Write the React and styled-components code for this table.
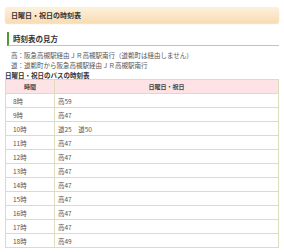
import React from "react";
import styled, { createGlobalStyle } from "styled-components";

const GlobalStyle = createGlobalStyle`
    html, body {
        margin: 0;
        padding: 0;
        background: #fff;
    }
    body {
        font-family: "Noto Sans CJK JP", "Noto Sans", sans-serif;
        color: #444;
    }
`;

const rows = [
    { hour: "8時", times: "高59" },
    { hour: "9時", times: "高47" },
    { hour: "10時", times: "道25　道50" },
    { hour: "11時", times: "高47" },
    { hour: "12時", times: "高47" },
    { hour: "13時", times: "高47" },
    { hour: "14時", times: "高47" },
    { hour: "15時", times: "高47" },
    { hour: "16時", times: "高47" },
    { hour: "17時", times: "高47" },
    { hour: "18時", times: "高49" },
];

function App() {
    return (
        <>
            <GlobalStyle />
            <Page>
                <TitleBox>日曜日・祝日の時刻表</TitleBox>
                <SectionHead>時刻表の見方</SectionHead>
                <Notes>
                    <p>高：阪急高槻駅経由ＪＲ高槻駅南行（道鵜町は経由しません）</p>
                    <p>道：道鵜町から阪急高槻駅経由ＪＲ高槻駅南行</p>
                </Notes>
                <Caption>日曜日・祝日のバスの時刻表</Caption>
                <Table>
                    <thead>
                        <tr>
                            <Th className="hour">時間</Th>
                            <Th>日曜日・祝日</Th>
                        </tr>
                    </thead>
                    <tbody>
                        {rows.map((r) => (
                            <tr key={r.hour}>
                                <Td className="hour">{r.hour}</Td>
                                <Td>{r.times}</Td>
                            </tr>
                        ))}
                    </tbody>
                </Table>
            </Page>
        </>
    );
}

const Page = styled.div`
    width: 284px;
    padding: 7px 5px 0 5px;
    box-sizing: border-box;
`;

const TitleBox = styled.div`
    height: 16px;
    box-sizing: border-box;
    border-radius: 2px;
    background: linear-gradient(to bottom, #fdf1de, #f9dcb2);
    box-shadow: 0 1px 1px rgba(200, 170, 120, 0.35);
    padding-left: 6px;
    font-size: 7px;
    font-weight: bold;
    line-height: 16px;
    color: #333;
`;

const SectionHead = styled.div`
    margin-top: 9px;
    margin-left: 2px;
    height: 14px;
    box-sizing: border-box;
    border-left: 2px solid #4d9a36;
    border-bottom: 1px solid #a9d98c;
    padding-left: 4px;
    font-size: 7.5px;
    font-weight: bold;
    line-height: 13px;
    color: #333;
`;

const Notes = styled.div`
    margin-top: 4px;
    padding-left: 6px;
    p {
        margin: 0;
        font-size: 6.5px;
        line-height: 10px;
        color: #555;
    }
`;

const Caption = styled.div`
    margin-top: 1px;
    font-size: 6.5px;
    font-weight: bold;
    line-height: 8px;
    color: #333;
`;

const Table = styled.table`
    width: 274px;
    border-collapse: collapse;
    font-size: 6.5px;
    color: #555;
    tr {
        height: 14px;
    }
`;

const Th = styled.th`
    background: #fde3e6;
    border: 1px solid #dcdcbf;
    font-weight: bold;
    font-size: 6px;
    color: #444;
    text-align: center;
    padding: 0;
    &.hour {
        width: 48px;
    }
`;

const Td = styled.td`
    border: 1px solid #dcdcbf;
    padding: 0 0 0 3px;
    text-align: left;
    &.hour {
        padding-left: 7px;
    }
`;

export default App;
